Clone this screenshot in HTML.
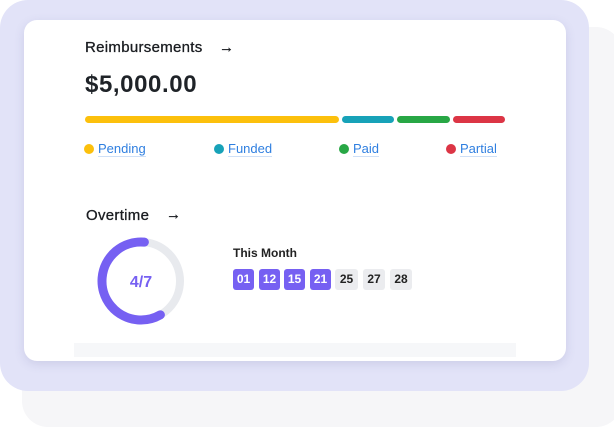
<!DOCTYPE html>
<html><head><meta charset="utf-8"><style>
*{margin:0;padding:0;box-sizing:border-box}
body{width:614px;height:417px;position:relative;overflow:hidden;background:#fff;font-family:"Liberation Sans",sans-serif;color:#1f2328}
.abs{position:absolute}
.bg2{left:22px;top:27px;width:600px;height:400px;background:#f6f6f8;border-radius:26px}
.bg1{left:0;top:0;width:589px;height:391px;background:#e2e3f8;border-radius:28px}
.card{left:24px;top:20px;width:542px;height:341px;background:#fff;border-radius:13px;box-shadow:0 3px 10px rgba(80,80,140,.15);overflow:hidden}
.strip{left:74px;top:343px;width:442px;height:14px;background:#f6f7f9}
.h{font-size:15px;font-weight:normal;letter-spacing:.3px;color:#1a1d21;-webkit-text-stroke:.3px #1a1d21}
.amt{font-size:24px;font-weight:bold;left:85px;top:71px;letter-spacing:.6px}
.bar{height:7px;border-radius:4px;top:116px}
.lg{top:141px;font-size:13px;color:#2f7fe0;border-bottom:1.5px solid #cfe0f7;line-height:15px}
.dot{width:10px;height:10px;border-radius:50%;top:144px}
.chip{top:269px;width:21px;height:21px;border-radius:3px;font-size:12px;font-weight:bold;text-align:center;line-height:21px}
.p{background:#7660f2;color:#fff}.g{background:#ebecef;color:#222}
</style></head><body>
<div class="abs bg2"></div>
<div class="abs bg1"></div>
<div class="abs card"></div>
<div class="abs strip"></div>
<div class="abs h" style="left:85px;top:39px">Reimbursements</div>
<div class="abs h" style="left:219px;top:39px">→</div>
<div class="abs amt">$5,000.00</div>
<div class="abs bar" style="left:85px;width:254px;background:#fcc00c"></div>
<div class="abs bar" style="left:342px;width:52px;background:#17a2b8"></div>
<div class="abs bar" style="left:397px;width:53px;background:#28a745"></div>
<div class="abs bar" style="left:453px;width:52px;background:#dc3545"></div>
<div class="abs dot" style="left:84px;background:#fcc00c"></div><div class="abs lg" style="left:98px">Pending</div>
<div class="abs dot" style="left:214px;background:#17a2b8"></div><div class="abs lg" style="left:228px">Funded</div>
<div class="abs dot" style="left:339px;background:#28a745"></div><div class="abs lg" style="left:353px">Paid</div>
<div class="abs dot" style="left:446px;background:#dc3545"></div><div class="abs lg" style="left:460px">Partial</div>
<div class="abs h" style="left:86px;top:207px">Overtime</div>
<div class="abs h" style="left:166px;top:206px">→</div>
<svg class="abs" style="left:96px;top:236px" width="90" height="90" viewBox="0 0 90 90">
<circle cx="45" cy="45" r="39" fill="none" stroke="#e8eaee" stroke-width="8"/>
<circle cx="45" cy="45" r="39" fill="none" stroke="#7660f2" stroke-width="9" stroke-linecap="round" stroke-dasharray="146 300" transform="translate(90 0) scale(-1 1) rotate(-95 45 45)"/>
<text x="45" y="51" text-anchor="middle" font-family="Liberation Sans" font-size="16" font-weight="bold" fill="#7660f2">4/7</text>
</svg>
<div class="abs" style="left:233px;top:246px;font-size:12px;font-weight:bold;color:#222">This Month</div>
<div class="abs chip p" style="left:233px">01</div>
<div class="abs chip p" style="left:259px">12</div>
<div class="abs chip p" style="left:284px">15</div>
<div class="abs chip p" style="left:310px">21</div>
<div class="abs chip g" style="left:335px;width:23px">25</div>
<div class="abs chip g" style="left:363px;width:22px">27</div>
<div class="abs chip g" style="left:390px;width:22px">28</div>
</body></html>
